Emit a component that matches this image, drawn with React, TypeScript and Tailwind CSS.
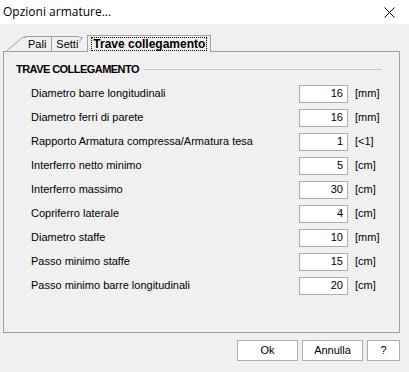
const rows: [string, string, string][] = [
  ["Diametro barre longitudinali", "16", "[mm]"],
  ["Diametro ferri di parete", "16", "[mm]"],
  ["Rapporto Armatura compressa/Armatura tesa", "1", "[<1]"],
  ["Interferro netto minimo", "5", "[cm]"],
  ["Interferro massimo", "30", "[cm]"],
  ["Copriferro laterale", "4", "[cm]"],
  ["Diametro staffe", "10", "[mm]"],
  ["Passo minimo staffe", "15", "[cm]"],
  ["Passo minimo barre longitudinali", "20", "[cm]"],
];

export default function App() {
  return (
    <div className="flex h-[372px] w-[409px] flex-col overflow-hidden bg-[#f0f0f0] font-['Liberation_Sans',sans-serif] text-[11px] text-black">
      {/* Title bar */}
      <div className="flex h-[24px] items-center justify-between bg-white pl-[3px] pr-[14px]">
        <span className="font-['Open_Sans',sans-serif] text-[12px]">Opzioni armature...</span>
        <svg width="11" height="11" viewBox="0 0 11 11" className="mt-[1px]">
          <path d="M0.5 0.5 L10.5 10.5 M10.5 0.5 L0.5 10.5" stroke="#000" strokeWidth="1" />
        </svg>
      </div>

      {/* Tabs */}
      <div className="mt-[11px] flex h-[16px] items-end pl-[6px]">
        <svg width="20" height="15" viewBox="0 0 20 15" className="-mr-px">
          <path d="M0.5 15 L16.5 1.5 L20 1.5" fill="none" stroke="#a0a0a0" />
        </svg>
        <div className="flex h-[15px] items-center border-t border-r border-[#a0a0a0] pl-[3px] pr-[5px]">Pali</div>
        <div className="flex h-[15px] items-center border-t border-[#a0a0a0] pl-[4px] pr-[1px]">Setti</div>
        <svg width="8" height="15" viewBox="0 0 8 15">
          <path d="M0 1.5 L3.5 1.5 L0 6" fill="none" stroke="#a0a0a0" />
        </svg>
        <div className="relative z-10 -mb-px flex h-[17px] w-[124px] items-center justify-center border-x border-t border-[#a0a0a0] bg-[#f0f0f0]">
          <span className="border border-dotted border-black px-[1px] text-[12px] leading-[12px] font-bold">Trave collegamento</span>
        </div>
      </div>

      {/* Panel */}
      <div className="mx-[3px] flex h-[282px] w-[397px] flex-col border border-[#a0a0a0] pl-[12px]">
        <div className="mt-[9px] flex items-center">
          <span className="font-bold tracking-[-0.55px]">TRAVE COLLEGAMENTO</span>
          <div className="ml-[6px] h-px w-[237px] bg-[#c8c8c8]" />
        </div>
        <div className="mt-[7px] flex flex-col gap-[6px]">
          {rows.map(([label, value, unit]) => (
            <div key={label} className="flex h-[18px] items-center">
              <span className="w-[283px] pl-[15px]">{label}</span>
              <div className="flex h-[18px] w-[49px] items-center justify-end border border-[#adadad] bg-white pr-[4px]">{value}</div>
              <span className="ml-[7px]">{unit}</span>
            </div>
          ))}
        </div>
      </div>

      {/* Buttons */}
      <div className="mt-[7px] flex justify-end gap-[4px] pr-[9px]">
        <button className="h-[21px] w-[61px] border border-[#adadad] bg-white">Ok</button>
        <button className="h-[21px] w-[61px] border border-[#adadad] bg-white">Annulla</button>
        <button className="h-[21px] w-[33px] border border-[#adadad] bg-white">?</button>
      </div>
    </div>
  );
}
